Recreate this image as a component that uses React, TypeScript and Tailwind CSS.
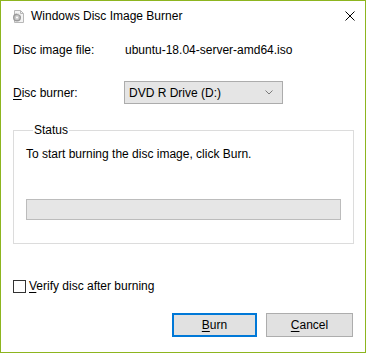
import React from 'react';

const font = { fontFamily: '"Liberation Sans", Arial, sans-serif' };

function DiscIcon() {
  return (
    <svg width="16" height="16" viewBox="0 0 16 16" className="shrink-0">
      <path d="M4.5 2.5h6l3 3v9h-9z" fill="#f4f4f4" stroke="#b8b8b8" />
      <path d="M10.5 2.5v3h3" fill="none" stroke="#b8b8b8" />
      <circle cx="7" cy="9.5" r="4" fill="#9a9a9a" />
      <circle cx="7" cy="9.5" r="2.6" fill="#c8c8c8" />
      <path d="M7 5.5a4 4 0 0 1 3.4 2" fill="none" stroke="#e8e8e8" />
      <circle cx="7" cy="9.5" r="1" fill="#ffffff" />
    </svg>
  );
}

function CloseIcon() {
  return (
    <svg width="10" height="10" viewBox="0 0 10 10">
      <path d="M0.5 0.5l9 9M9.5 0.5l-9 9" stroke="#000" strokeWidth="1" />
    </svg>
  );
}

function Chevron() {
  return (
    <svg width="8" height="5" viewBox="0 0 8 5">
      <path d="M0.5 0.5l3.5 3.5 3.5-3.5" fill="none" stroke="#7a7a7a" strokeWidth="1" />
    </svg>
  );
}

export default function App() {
  return (
    <div
      className="w-[366px] h-[353px] bg-white border border-[#8db51f] flex flex-col text-[12px] text-black leading-none"
      style={font}
    >
      {/* title bar */}
      <div className="h-[30px] flex items-center pl-[9px] pr-[10px]">
        <DiscIcon />
        <span className="ml-[5px] text-[12px]">Windows Disc Image Burner</span>
        <div className="ml-auto flex items-center">
          <CloseIcon />
        </div>
      </div>

      <div className="flex flex-col px-[12px]">
        <div className="mt-[9px] h-[20px] flex items-center">
          <span className="w-[112px]">Disc image file:</span>
          <span>ubuntu-18.04-server-amd64.iso</span>
        </div>

        <div className="mt-[21px] h-[23px] flex items-center">
          <span className="w-[111px]">
            <span className="underline underline-offset-2">D</span>isc burner:
          </span>
          <div className="w-[159px] h-[23px] bg-[#e5e5e5] border border-[#acacac] flex items-center pl-[4px] pr-[9px]">
            <span>DVD R Drive (D:)</span>
            <span className="ml-auto flex">
              <Chevron />
            </span>
          </div>
        </div>

        <fieldset className="mt-[18px] h-[122px] border border-[#dcdcdc] px-[12px] pt-[8px]">
          <legend className="ml-[7px] px-[1px] text-[12px] leading-[16px]">Status</legend>
          <div className="h-[16px] flex items-center">To start burning the disc image, click Burn.</div>
          <div className="mt-[37px] w-[315px] h-[21px] bg-[#e6e6e6] border border-[#bcbcbc]" />
        </fieldset>

        <label className="mt-[35px] h-[14px] flex items-center">
          <span className="w-[13px] h-[13px] border border-[#333] bg-white" />
          <span className="ml-[3px]">
            <span className="underline underline-offset-2">V</span>erify disc after burning
          </span>
        </label>

        <div className="mt-[20px] flex justify-end gap-[9px]">
          <button className="w-[85px] h-[24px] bg-[#e1e1e1] border-2 border-[#0078d7] flex items-center justify-center">
            <span>
              <span className="underline underline-offset-2">B</span>urn
            </span>
          </button>
          <button className="w-[87px] h-[24px] bg-[#e1e1e1] border border-[#adadad] flex items-center justify-center">
            <span>
              <span className="underline underline-offset-2">C</span>ancel
            </span>
          </button>
        </div>
      </div>
    </div>
  );
}
